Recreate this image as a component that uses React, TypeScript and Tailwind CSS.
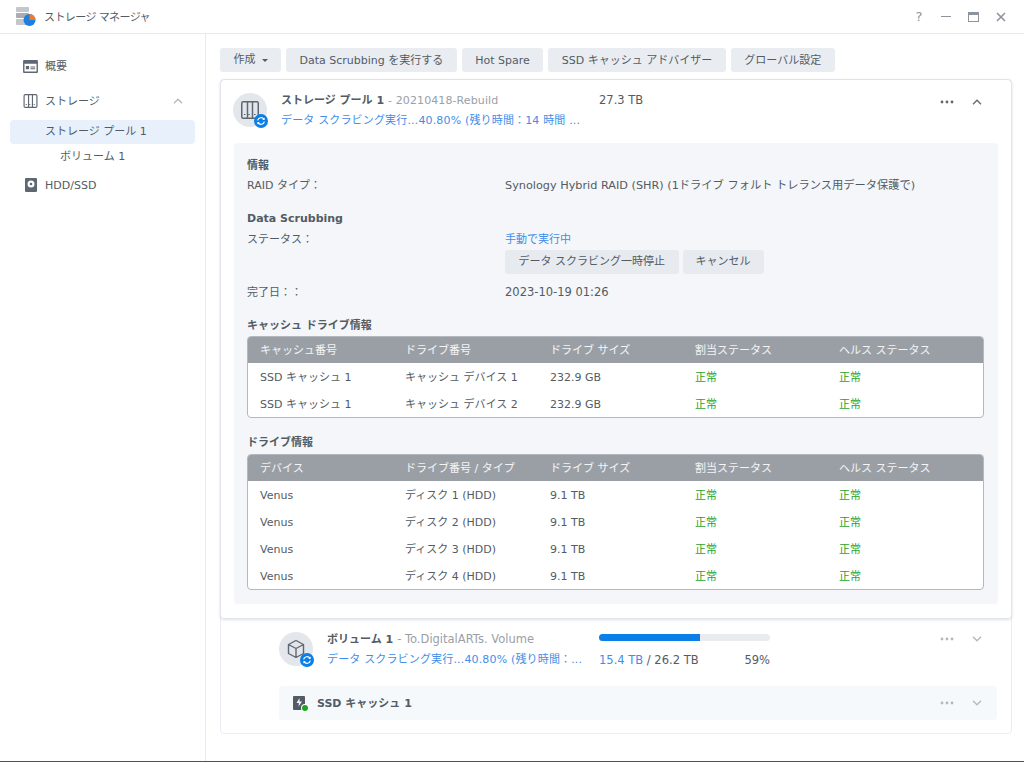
const toolbarButtons = ['Data Scrubbing を実行する', 'Hot Spare', 'SSD キャッシュ アドバイザー', 'グローバル設定']

const cacheRows = [
  ['SSD キャッシュ 1', 'キャッシュ デバイス 1', '232.9 GB', '正常', '正常'],
  ['SSD キャッシュ 1', 'キャッシュ デバイス 2', '232.9 GB', '正常', '正常'],
]

const driveRows = [
  ['Venus', 'ディスク 1 (HDD)', '9.1 TB', '正常', '正常'],
  ['Venus', 'ディスク 2 (HDD)', '9.1 TB', '正常', '正常'],
  ['Venus', 'ディスク 3 (HDD)', '9.1 TB', '正常', '正常'],
  ['Venus', 'ディスク 4 (HDD)', '9.1 TB', '正常', '正常'],
]

function Table({ head, rows }: { head: string[]; rows: string[][] }) {
  return (
    <div className="w-[737px] rounded-[4px] border border-[#b4b9bf] bg-white overflow-hidden">
      <div className="grid grid-cols-[145px_145px_145px_144px_1fr] h-[26px] items-center bg-[#9a9fa6] pl-3 pt-[3px] text-white/90">
        {head.map(h => <div key={h}>{h}</div>)}
      </div>
      {rows.map((r, i) => (
        <div key={i} className="grid grid-cols-[145px_145px_145px_144px_1fr] h-[27px] items-center pl-3 pt-[4px]">
          {r.map((c, j) => <div key={j} className={j > 2 ? 'text-[#1fa51f]' : ''}>{c}</div>)}
        </div>
      ))}
    </div>
  )
}

function SyncBadge({ className }: { className: string }) {
  return (
    <svg viewBox="0 0 14 14" className={`absolute h-[14px] w-[14px] ${className}`}>
      <circle cx="7" cy="7" r="7" fill="#0a7fe8" />
      <path d="M3.6 6.4A3.5 3.5 0 0 1 10 5.4M10.4 7.6A3.5 3.5 0 0 1 4 8.6" fill="none" stroke="#fff" strokeWidth="1.2" />
      <path d="M10.6 3.6v2.4H8.2zM3.4 10.4V8h2.4z" fill="#fff" />
    </svg>
  )
}

function Dots({ dark }: { dark?: boolean }) {
  return (
    <svg viewBox="0 0 14 4" className="h-[4px] w-[14px]" fill={dark ? '#5f6872' : '#b3b8be'}>
      <circle cx="2" cy="2" r="1.4" /><circle cx="7" cy="2" r="1.4" /><circle cx="12" cy="2" r="1.4" />
    </svg>
  )
}

function Chevron({ up, dark }: { up?: boolean; dark?: boolean }) {
  return (
    <svg viewBox="0 0 10 6" className="h-[6px] w-[10px]" fill="none" stroke={dark ? '#5f6872' : '#b3b8be'} strokeWidth="1.3">
      <path d={up ? 'M1 5.2 5 1.2l4 4' : 'M1 .8l4 4 4-4'} />
    </svg>
  )
}

function DriveBay({ size }: { size: string }) {
  return (
    <svg viewBox="0 0 18 18" className={size} fill="none" stroke="#5f6872" strokeWidth="1.5">
      <rect x=".75" y=".75" width="16.5" height="16.5" rx="1.5" />
      <path d="M6.5 1v16M11.5 1v16" />
      <path d="M2.8 13.5h1.6M7.2 13.5h1.6M13 13.5h1.6" strokeWidth="1.2" />
    </svg>
  )
}

export default function App() {
  return (
    <div className="flex h-[762px] w-[1024px] flex-col overflow-hidden bg-white text-[11px] text-[#535b64] [font-family:'DejaVu_Sans','Noto_Sans_CJK_JP',sans-serif]">
      {/* title bar */}
      <div className="flex h-[34px] shrink-0 items-center border-b border-[#e6e9ee] pl-4 pr-[18px]">
        <svg viewBox="0 0 20 20" className="h-[20px] w-[20px]">
          <rect x="0" y="0" width="13" height="5" rx="1" fill="#c3c6ca" />
          <rect x="0" y="6" width="13" height="5" rx="1" fill="#a9adb2" />
          <rect x="0" y="12" width="13" height="6" rx="1" fill="#c3c6ca" />
          <circle cx="13.5" cy="13" r="6" fill="#1f7fe0" />
          <path d="M13.5 7a6 6 0 0 1 6 6h-6z" fill="#ee7b30" />
        </svg>
        <div className="ml-2 pt-[4px] tracking-[-0.6px]">ストレージ マネージャ</div>
        <div className="ml-auto flex items-center gap-[17px] text-[#8d949c]">
          <div className="w-[10px] text-center text-[13px]">?</div>
          <div className="h-[1.5px] w-[10px] bg-[#8d949c]" />
          <div className="h-[10px] w-[11px] border border-t-[3px] border-[#8d949c]" />
          <svg viewBox="0 0 10 10" className="h-[10px] w-[10px]" stroke="#8d949c" strokeWidth="1.6"><path d="M1 1l8 8M9 1l-8 8" /></svg>
        </div>
      </div>

      <div className="flex min-h-0 flex-1">
        {/* sidebar */}
        <div className="w-[206px] shrink-0 border-r border-[#e6e9ee] pl-[10px] pr-[10px] pt-[18px]">
          <div className="flex h-[28px] items-center gap-[7px] pl-[13px]">
            <svg viewBox="0 0 16 14" className="h-[13px] w-[15px]" fill="#5f6872">
              <path fillRule="evenodd" d="M1 0h14a1 1 0 0 1 1 1v12a1 1 0 0 1-1 1H1a1 1 0 0 1-1-1V1a1 1 0 0 1 1-1zm.5 4v8.5h13V4zM3 6.5h3.5V10H3zM8 7h5v1H8zm0 2h5v1H8z" />
            </svg>
            <span className="pt-[3px]">概要</span>
          </div>
          <div className="mt-[7px] flex h-[28px] items-center gap-[7px] pl-[13px]">
            <DriveBay size="h-[14px] w-[15px]" />
            <span className="pt-[3px]">ストレージ</span>
            <div className="ml-auto pr-[12px]"><Chevron up /></div>
          </div>
          <div className="mt-[5px] flex h-[24px] items-center rounded-[4px] bg-[#e8f1fb] pl-[35px] pt-[1px]">ストレージ プール 1</div>
          <div className="flex h-[24px] items-center pl-[50px] pt-[2px]">ボリューム 1</div>
          <div className="mt-[3px] flex h-[28px] items-center gap-[8px] pl-[15px]">
            <svg viewBox="0 0 12 14" className="h-[14px] w-[12px]" fill="#5f6872">
              <path fillRule="evenodd" d="M1 0h10a1 1 0 0 1 1 1v12a1 1 0 0 1-1 1H1a1 1 0 0 1-1-1V1a1 1 0 0 1 1-1zm5 2.5a3.5 3.5 0 1 0 0 7 3.5 3.5 0 0 0 0-7zm0 2.2a1.3 1.3 0 1 1 0 2.6 1.3 1.3 0 0 1 0-2.6z" />
            </svg>
            <span className="pt-[3px]">HDD/SSD</span>
          </div>
        </div>

        {/* main */}
        <div className="min-w-0 flex-1 pl-[14px] pr-[12px] pt-[14px]">
          <div className="flex gap-[5px]">
            <div className="flex h-[24px] w-[61px] items-center justify-center gap-[6px] rounded-[3px] bg-[#e9edf2]">
              作成
              <span className="h-0 w-0 border-x-[3px] border-t-[3px] border-x-transparent border-t-[#535b64]" />
            </div>
            {toolbarButtons.map(b => (
              <div key={b} className="flex h-[24px] items-center rounded-[3px] bg-[#e9edf2] px-[13.5px] pt-[2px]">{b}</div>
            ))}
          </div>

          <div className="mt-[7px] h-[655px] w-[792px] rounded-[4px] border border-[#e9ecf1]">
            {/* pool card */}
            <div className="relative -m-px h-[540px] rounded-[4px] border border-[#e1e5ea] px-[13px] shadow-[0_1px_3px_rgba(90,105,125,0.2)]">
              <div className="flex h-[63px] items-start pt-[13px]">
                <div className="relative -ml-px flex h-[34px] w-[34px] shrink-0 items-center justify-center rounded-full bg-[#e3e7ec]">
                  <DriveBay size="h-[18px] w-[18px]" />
                  <SyncBadge className="-right-[1px] -bottom-[1px]" />
                </div>
                <div className="ml-[14px] w-[318px] min-w-0">
                  <div className="flex h-[16px] items-center">
                    <span className="font-bold">ストレージ プール 1</span>
                    <span className="ml-1 whitespace-nowrap text-[#9aa0a7] tracking-[0.1px]">- 20210418-Rebuild</span>
                  </div>
                  <div className="mt-[4px] whitespace-nowrap text-[#3f8ee8] tracking-[0.16px]">データ スクラビング実行...40.80% (残り時間：14 時間 ...</div>
                </div>
                <div className="flex h-[16px] items-center text-[11.5px]">27.3 TB</div>
                <div className="ml-auto mt-[6px] flex items-center gap-[18px] pr-[16px]">
                  <Dots dark /><Chevron up dark />
                </div>
              </div>

              <div className="h-[461px] rounded-[3px] bg-[#f4f6f9] px-[13px] pt-[15px]">
                <div className="h-[14px] font-bold">情報</div>
                <div className="mt-[5px] flex h-[18px] items-center">
                  <div className="w-[258px]">RAID タイプ：</div>
                  <div className="text-[11.25px]">Synology Hybrid RAID (SHR) (1ドライブ フォルト トレランス用データ保護で)</div>
                </div>
                <div className="mt-[16px] h-[16px] font-bold leading-[16px]">Data Scrubbing</div>
                <div className="mt-[4px] flex h-[18px] items-center">
                  <div className="w-[258px]">ステータス：</div>
                  <div className="text-[#3f8ee8]">手動で実行中</div>
                </div>
                <div className="mt-[1px] flex gap-1 pl-[258px]">
                  <div className="flex h-[24px] items-center rounded-[3px] bg-[#e7eaef] px-[13.5px] pt-[1px]">データ スクラビング一時停止</div>
                  <div className="flex h-[24px] items-center rounded-[3px] bg-[#e7eaef] px-[13px] pt-[1px]">キャンセル</div>
                </div>
                <div className="mt-[10px] flex h-[18px] items-center">
                  <div className="w-[258px]">完了日：：</div>
                  <div className="text-[11.5px]">2023-10-19 01:26</div>
                </div>
                <div className="mt-[16px] h-[16px] font-bold">キャッシュ ドライブ情報</div>
                <div className="mt-[2px]">
                  <Table head={['キャッシュ番号', 'ドライブ番号', 'ドライブ サイズ', '割当ステータス', 'ヘルス ステータス']} rows={cacheRows} />
                </div>
                <div className="mt-[17px] h-[16px] font-bold">ドライブ情報</div>
                <div className="mt-[3px]">
                  <Table head={['デバイス', 'ドライブ番号 / タイプ', 'ドライブ サイズ', '割当ステータス', 'ヘルス ステータス']} rows={driveRows} />
                </div>
              </div>
            </div>

            {/* volume row */}
            <div className="pl-[58px] pr-[14px]">
              <div className="flex h-[68px] items-start pt-[14px]">
                <div className="relative flex h-[34px] w-[34px] shrink-0 items-center justify-center rounded-full bg-[#e3e7ec]">
                  <svg viewBox="0 0 20 20" className="h-[20px] w-[20px]" fill="none" stroke="#5f6872" strokeWidth="1.4" strokeLinejoin="round">
                    <path d="M10 1.5l7.5 4v9l-7.5 4-7.5-4v-9zM2.5 5.5l7.5 4 7.5-4M10 9.5v9" />
                  </svg>
                  <SyncBadge className="-right-[1px] -bottom-[1px]" />
                </div>
                <div className="ml-[14px] w-[272px] min-w-0">
                  <div className="flex h-[16px] items-center">
                    <span className="font-bold">ボリューム 1</span>
                    <span className="ml-1 whitespace-nowrap text-[#9aa0a7] text-[11.5px]">- To.DigitalARTs. Volume</span>
                  </div>
                  <div className="mt-[4px] whitespace-nowrap text-[#3f8ee8] tracking-[0.16px]">データ スクラビング実行...40.80% (残り時間：...</div>
                </div>
                <div className="w-[171px] pt-[2px]">
                  <div className="h-[7px] overflow-hidden rounded-full bg-[#eaebee]">
                    <div className="h-full w-[59%] bg-[#0a7fe8]" />
                  </div>
                  <div className="mt-[11px] flex justify-between text-[11.5px]">
                    <span><span className="text-[#3f8ee8]">15.4 TB</span> / 26.2 TB</span>
                    <span>59%</span>
                  </div>
                </div>
                <div className="ml-auto mt-[4px] flex items-center gap-[18px] pr-[15px]">
                  <Dots /><Chevron />
                </div>
              </div>
              <div className="flex h-[34px] items-center rounded-[3px] bg-[#f6f9fc] pl-[14px] pr-[15px]">
                <div className="relative h-[14px] w-[14px]">
                  <svg viewBox="0 0 12 14" className="h-[14px] w-[12px]" fill="#535b64">
                    <path fillRule="evenodd" d="M1 0h10a1 1 0 0 1 1 1v12a1 1 0 0 1-1 1H1a1 1 0 0 1-1-1V1a1 1 0 0 1 1-1zm5.5 2L3.5 7H6l-.5 3.5L9 5.5H6.5z" />
                  </svg>
                  <div className="absolute -right-[1px] -bottom-[1px] h-[6px] w-[6px] rounded-full bg-[#1fa51f] ring-1 ring-white" />
                </div>
                <span className="ml-[10px] pt-[2px] font-bold">SSD キャッシュ 1</span>
                <div className="ml-auto flex items-center gap-[18px]">
                  <Dots /><Chevron />
                </div>
              </div>
            </div>
          </div>
        </div>
      </div>
      <div className="h-[1px] shrink-0 bg-[#5a5148]" />
    </div>
  )
}
